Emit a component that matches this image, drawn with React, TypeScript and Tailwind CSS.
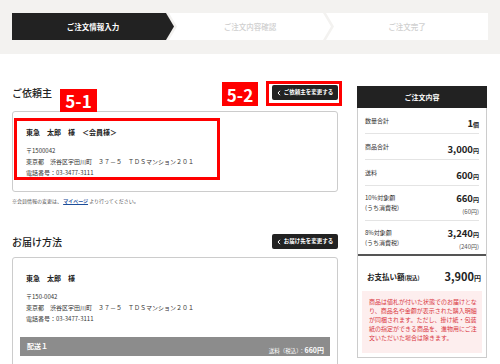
import React from "react";

const steps = ["ご注文情報入力", "ご注文内容確認", "ご注文完了"];

function Chevron() {
  return (
    <svg width="4" height="6" viewBox="0 0 4 6" className="shrink-0">
      <path d="M3 0.8 L1 3 L3 5.2" fill="none" stroke="white" strokeWidth="1" />
    </svg>
  );
}

function ChangeButton({ label }: { label: string }) {
  return (
    <div className="h-[15px] w-[66px] bg-[#222] rounded-[2px] flex items-center justify-center gap-[3px] text-white text-[5.5px] font-bold leading-none">
      <Chevron />
      <span>{label}</span>
    </div>
  );
}

function SummaryRow({ label, num, unit }: { label: string; num: string; unit: string }) {
  return (
    <div className="mx-[7px] h-[26px] border-b border-[#e4e4e4] flex items-center justify-between">
      <span className="text-[6px] text-[#333]">{label}</span>
      <span className="text-[#222] font-bold leading-none">
        <span className="text-[9.5px]">{num}</span>
        <span className="text-[6px]">{unit}</span>
      </span>
    </div>
  );
}

function TaxRow({ label, num, tax, last }: { label: string; num: string; tax: string; last?: boolean }) {
  return (
    <div className={"mx-[7px] flex items-center justify-between " + (last ? "h-[33px]" : "h-[35px] border-b border-[#e4e4e4]")}>
      <div className="text-[6px] leading-[10px] text-[#333]">
        <div>{label}</div>
        <div>(うち消費税)</div>
      </div>
      <div className="flex flex-col items-end gap-[2px]">
        <span className="text-[#222] font-bold leading-[11px]">
          <span className="text-[9.5px]">{num}</span>
          <span className="text-[6px]">円</span>
        </span>
        <span className="text-[6px] leading-[9px] text-[#555]">{tax}</span>
      </div>
    </div>
  );
}

export default function App() {
  return (
    <div className="w-[500px] h-[364px] overflow-hidden bg-white font-['Noto_Sans_CJK_JP','Noto_Sans',sans-serif] text-[#222]">
      {/* steps */}
      <div className="bg-[#f3f2f0] h-[54px] pt-[13px] px-[12px]">
        <div className="flex h-[27px]">
          <div className="flex-1 bg-[#222] flex items-center justify-center text-white text-[7.5px] font-bold [clip-path:polygon(0_0,calc(100%_-_8px)_0,100%_50%,calc(100%_-_8px)_100%,0_100%)]">
            {steps[0]}
          </div>
          <div className="flex-1 -ml-[5px] bg-white flex items-center justify-center text-[#cfcfcf] text-[7.5px] font-medium [clip-path:polygon(0_0,calc(100%_-_8px)_0,100%_50%,calc(100%_-_8px)_100%,0_100%,8px_50%)]">
            {steps[1]}
          </div>
          <div className="flex-1 -ml-[5px] bg-white flex items-center justify-center text-[#cfcfcf] text-[7.5px] font-medium [clip-path:polygon(0_0,100%_0,100%_100%,0_100%,8px_50%)]">
            {steps[2]}
          </div>
        </div>
      </div>

      <div className="flex gap-[19px] pl-[12px] pr-[13px] pt-[31px]">
        {/* left column */}
        <div className="w-[326px] relative">
          <div className="flex items-center justify-between h-[15px]">
            <span className="text-[10px] leading-none font-medium">ご依頼主</span>
            <ChangeButton label="ご依頼主を変更する" />
          </div>

          <div className="mt-[11px] border border-[#ccc] rounded-[3px] pt-[16px] pb-[13px] px-[13px]">
            <div className="text-[7px] leading-[9px] font-bold">東急　太郎　様　＜会員様＞</div>
            <div className="mt-[8px] text-[6px] leading-[11px] text-[#333]">
              <div>〒1500042</div>
              <div>東京都　渋谷区宇田川町　３７－５　ＴＤＳマンション２０１</div>
              <div>電話番号：03-3477-3111</div>
            </div>
          </div>

          <p className="mt-[5px] text-[5px] leading-[8px] text-[#555]">
            ※会員情報の変更は、 <span className="text-[#1d4e9a] font-bold underline">マイページ</span> より行ってください。
          </p>

          <div className="mt-[29px] flex items-center justify-between h-[15px]">
            <span className="text-[10px] leading-none font-medium">お届け方法</span>
            <ChangeButton label="お届け先を変更する" />
          </div>

          <div className="mt-[8px] border border-[#ccc] rounded-[3px] pt-[16px] pb-[40px] px-[7px]">
            <div className="pl-[6px]">
              <div className="text-[7px] leading-[9px] font-bold">東急　太郎　様</div>
              <div className="mt-[8px] text-[6px] leading-[11px] text-[#333]">
                <div>〒150-0042</div>
                <div>東京都　渋谷区宇田川町　３７－５　ＴＤＳマンション２０１</div>
                <div>電話番号：03-3477-3111</div>
              </div>
            </div>
            <div className="mt-[13px] h-[19px] bg-[#8c8c8c] flex items-center justify-between pl-[7px] pr-[6px] text-white">
              <span className="text-[7px] font-bold">配送１</span>
              <span className="leading-none">
                <span className="text-[5.5px]">送料（税込）：</span>
                <span className="text-[7px] font-bold">660円</span>
              </span>
            </div>
          </div>

          {/* annotations */}
          <div className="absolute left-[2px] top-[33px] w-[206px] h-[62px] border-[3px] border-[#f00]" />
          <div className="absolute left-[48px] top-[4px] w-[37px] h-[23px] bg-[#f00] text-white text-[17px] font-bold leading-none flex items-center justify-center">
            5-1
          </div>
          <div className="absolute left-[210px] top-[-3px] w-[36px] h-[24px] bg-[#f00] text-white text-[17px] font-bold leading-none flex items-center justify-center">
            5-2
          </div>
          <div className="absolute left-[254px] top-[-4px] w-[76px] h-[25px] border-[3px] border-[#f00]" />
        </div>

        {/* right column */}
        <div className="w-[130px] mt-[1px] self-start">
          <div className="h-[22px] bg-[#222] text-white text-[7px] font-bold flex items-center justify-center">ご注文内容</div>
          <div className="border-x border-b border-[#ccc]">
            <SummaryRow label="数量合計" num="1" unit="個" />
            <SummaryRow label="商品合計" num="3,000" unit="円" />
            <SummaryRow label="送料" num="600" unit="円" />
            <TaxRow label="10%対象額" num="660" tax="(60円)" />
            <TaxRow label="8%対象額" num="3,240" tax="(240円)" last />
            <div className="border-t-2 border-[#555] h-[37px] flex items-center justify-between pl-[9px] pr-[5px]">
              <span className="font-bold leading-none">
                <span className="text-[7.5px]">お支払い額</span>
                <span className="text-[5.5px]">(税込)</span>
              </span>
              <span className="font-bold leading-none">
                <span className="text-[11px]">3,900</span>
                <span className="text-[7px]">円</span>
              </span>
            </div>
            <div className="mx-[4px] mb-[4px] bg-[#fdeeee] pt-[6px] pb-[11px] pl-[7px] text-[6px] leading-[9px] text-[#d9363e]">
              商品は値札が付いた状態でのお届けとな<br />
              り、商品名や金額が表示された購入明細<br />
              が同梱されます。ただし、掛け紙・包装<br />
              紙の指定ができる商品を、進物用にご注<br />
              文いただいた場合は除きます。
            </div>
          </div>
        </div>
      </div>
    </div>
  );
}
